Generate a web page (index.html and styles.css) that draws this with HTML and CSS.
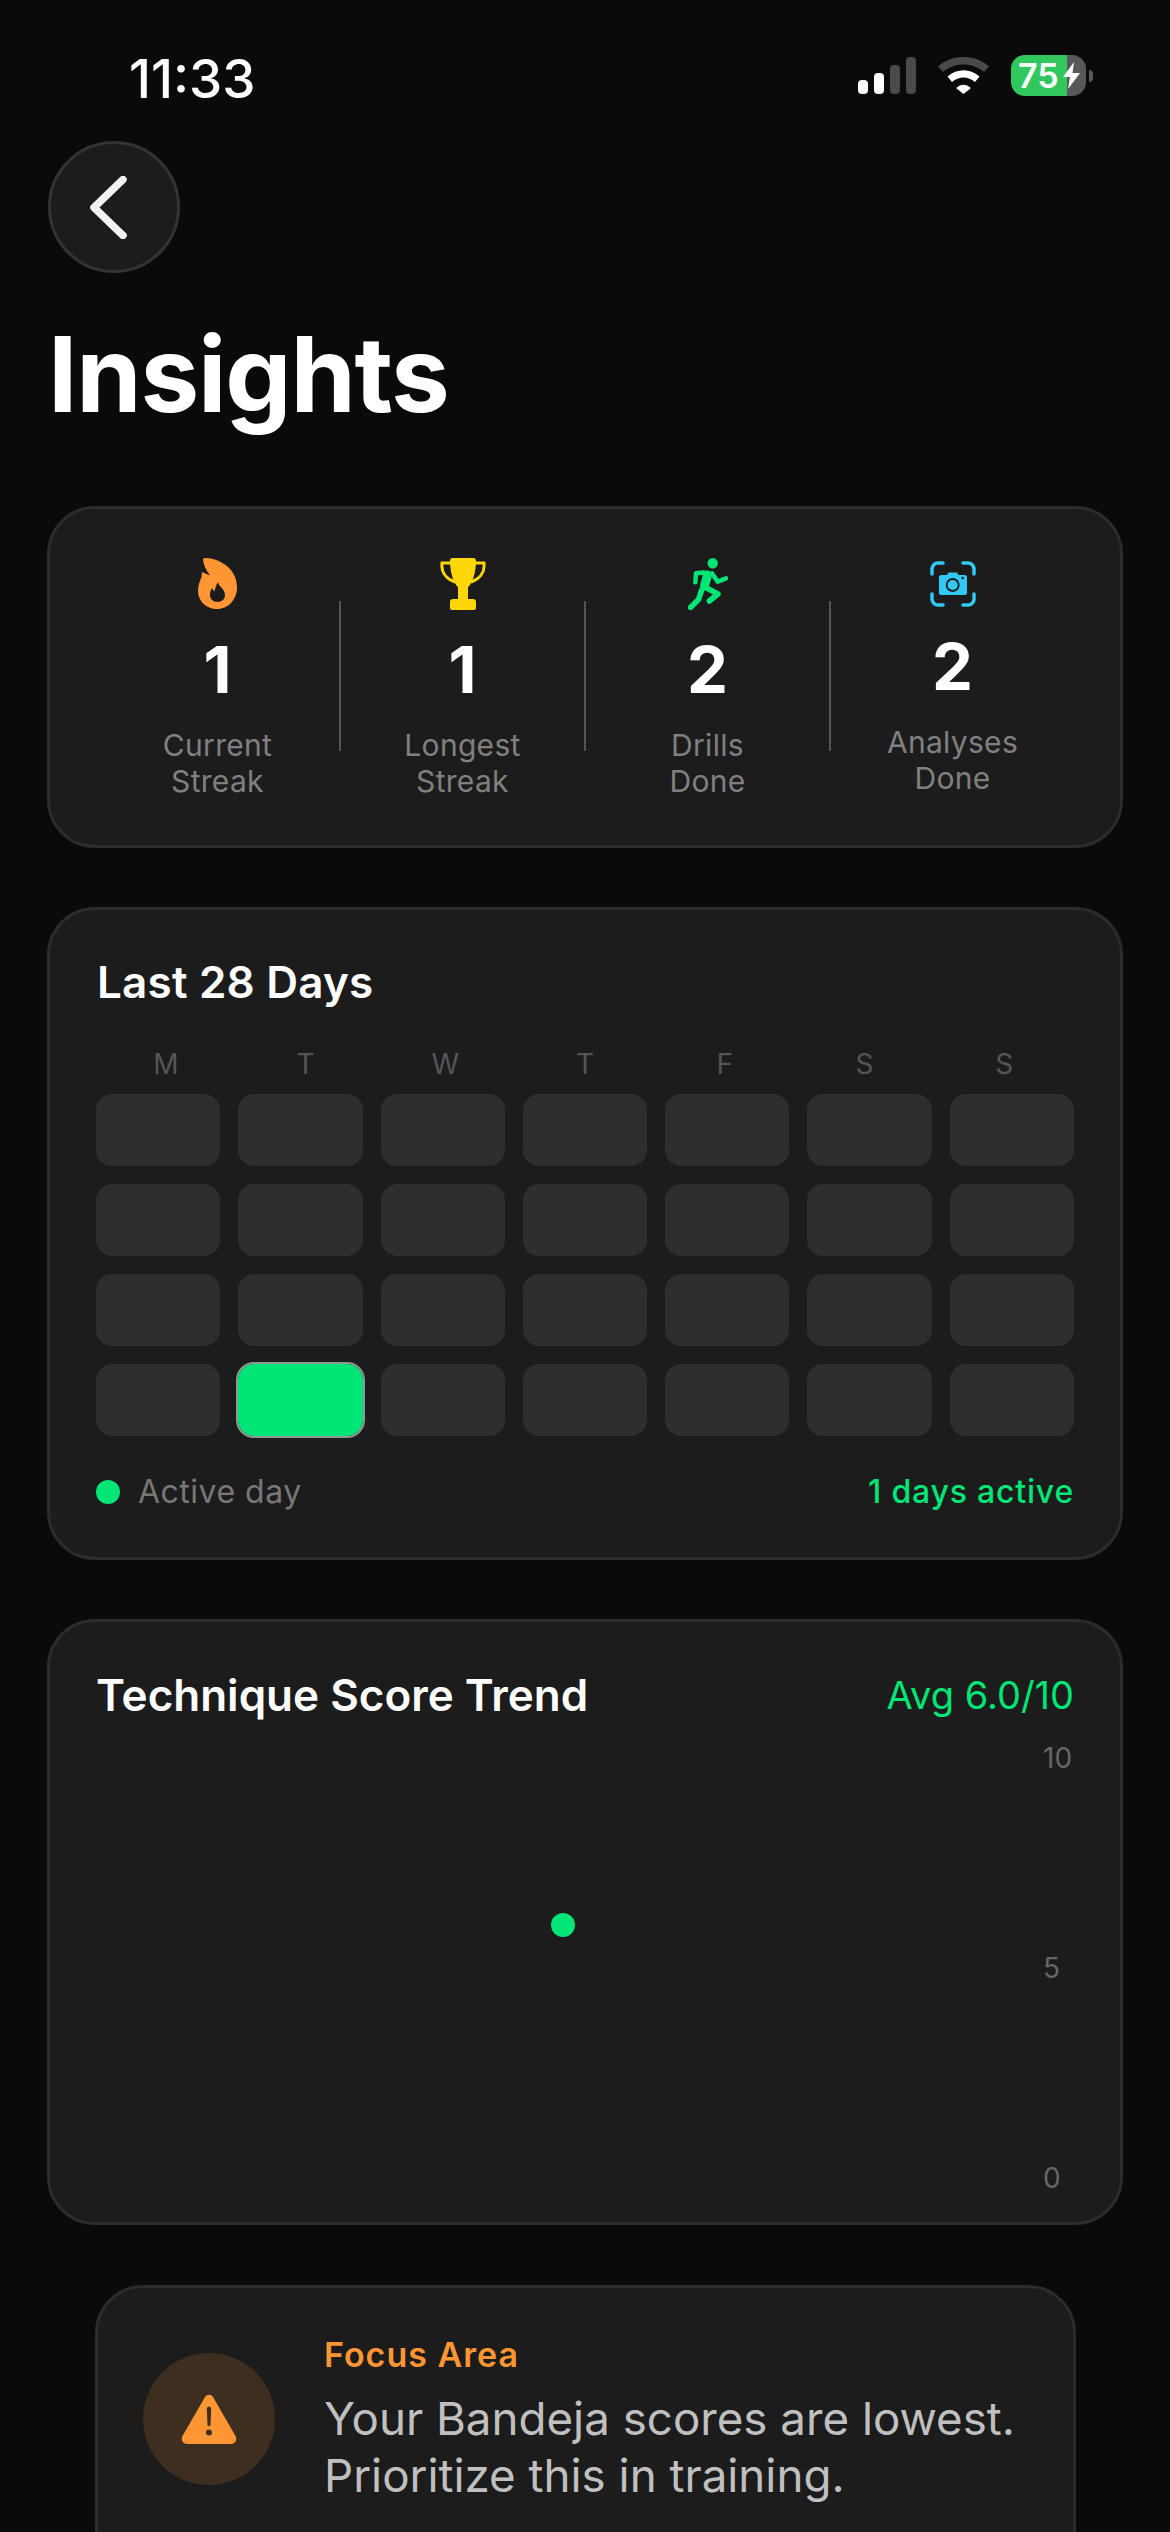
FILE: index.html
```html
<!DOCTYPE html>
<html lang="en">
<head>
<meta charset="utf-8">
<title>Insights</title>
<link rel="stylesheet" href="styles.css">
</head>
<body>
<div class="screen">
  <header class="status">
    <span class="time">11:33</span>
    <div class="status-icons">
      <div class="signal"><i class="bar b1"></i><i class="bar b2"></i><i class="bar b3 off"></i><i class="bar b4 off"></i></div>
      <svg class="wifi" viewBox="0 0 51 37"><path fill="#4a4a4a" d="M0 9.5C14-3.2 37-3.2 51 9.5L46 15C35 5 16 5 5 15Z"/><path fill="#fff" d="M9.5 19.5C19 11 32 11 41.5 19.5L37 25C30 19 21 19 14 25Z"/><path fill="#fff" d="M18 31C23 26.5 28 26.5 33 31L25.5 37Z"/></svg>
      <div class="battery-wrap">
        <div class="battery"><span class="battery-num">75</span><svg class="bolt" viewBox="0 0 17 27"><path fill="#fff" d="M11 0L0 15H7L5 27L17 11H9.5Z"/></svg></div>
        <i class="battery-tip"></i>
      </div>
    </div>
  </header>

  <button class="back" aria-label="Back"><svg class="chev" viewBox="0 0 37 63"><path d="M33 3.5L4 31.5L33 59.5" fill="none" stroke="#f2f2f2" stroke-width="7.500" stroke-linecap="round" stroke-linejoin="round"/></svg></button>

  <h1 class="title">Insights</h1>

  <section class="card stats">
    <div class="stat">
      <div class="stat-icon"><svg class="ic-flame" viewBox="0 0 39 51"><path fill="#FF9533" fill-rule="evenodd" d="M5 1.5C5 .5 6 0 8 0C24 1 39 12 39 29C39 42 30 51 19 51C8 51 0 43 0 33C0 27 2 23 3.500 19L4 14L12 17.500C8 12 5.500 7 5 1.500ZM20 24C20 28 27 31 27 37C27 41 24 44 19.500 44C15 44 12 41 12 37C12 34 13 32 14 30C15 32 15.500 33 16.500 33C17.500 30 18 27 20 24Z"/></svg></div>
      <div class="stat-num">1</div>
      <div class="stat-label">Current<br>Streak</div>
    </div>
    <i class="divider"></i>
    <div class="stat">
      <div class="stat-icon"><svg class="ic-trophy" viewBox="0 0 46 52"><path fill="#FFD60A" d="M10 2.500C10 1 11 0 12.500 0H33.500C35 0 36 1 36 2.500C36 17 31 27 28 29V41H33C35 41 36 42 36 44V50C36 51 35 52 34 52H12C11 52 10 51 10 50V44C10 42 11 41 13 41H18V29C15 27 10 17 10 2.500Z"/><path fill="none" stroke="#FFD60A" stroke-width="3" d="M11 5H2C1 14 6 21 15 24M35 5H44C45 14 40 21 31 24"/></svg></div>
      <div class="stat-num">1</div>
      <div class="stat-label">Longest<br>Streak</div>
    </div>
    <i class="divider"></i>
    <div class="stat">
      <div class="stat-icon"><svg class="ic-run" viewBox="0 0 40 52"><circle cx="24.700" cy="5.300" r="5.200" fill="#00E676"/><g fill="none" stroke="#00E676" stroke-linecap="round" stroke-linejoin="round"><path stroke-width="9" d="M19.500 17L16.500 28"/><path stroke-width="4.500" d="M16 14.500L8 15.300L7.300 24.300"/><path stroke-width="4.500" d="M24 15.300L29.700 23.700L38 20.300"/><path stroke-width="5.500" d="M16.300 28.700L30 36L21.300 43"/><path stroke-width="5.500" d="M13.700 32L10.500 41.500L2.500 49.500"/></g></svg></div>
      <div class="stat-num">2</div>
      <div class="stat-label">Drills<br>Done</div>
    </div>
    <i class="divider"></i>
    <div class="stat">
      <div class="stat-icon stat-icon-short"><svg class="ic-cam" viewBox="0 0 46 46"><g fill="none" stroke="#32C8F8" stroke-width="3.500" stroke-linecap="round"><path d="M2 13V8A6 6 0 0 1 8 2H13"/><path d="M33 2H38A6 6 0 0 1 44 8V13"/><path d="M2 33V38A6 6 0 0 0 8 44H13"/><path d="M33 44H38A6 6 0 0 0 44 38V33"/></g><path fill="#32C8F8" d="M11 14H17L18.500 11.500H27L28.500 14H35C36 14 37 15 37 16V32C37 33 36 34 35 34H11C10 34 9 33 9 32V16C9 15 10 14 11 14Z"/><circle cx="22.700" cy="24" r="6" fill="#32C8F8" stroke="#1c1c1c" stroke-width="1.800"/><circle cx="32.700" cy="17" r="1.300" fill="#1c1c1c"/></svg></div>
      <div class="stat-num">2</div>
      <div class="stat-label">Analyses<br>Done</div>
    </div>
  </section>

  <section class="card days">
    <h2 class="card-title">Last 28 Days</h2>
    <div class="dow"><span>M</span><span>T</span><span>W</span><span>T</span><span>F</span><span>S</span><span>S</span></div>
    <div class="grid">
      <i class="cell"></i><i class="cell"></i><i class="cell"></i><i class="cell"></i><i class="cell"></i><i class="cell"></i><i class="cell"></i>
      <i class="cell"></i><i class="cell"></i><i class="cell"></i><i class="cell"></i><i class="cell"></i><i class="cell"></i><i class="cell"></i>
      <i class="cell"></i><i class="cell"></i><i class="cell"></i><i class="cell"></i><i class="cell"></i><i class="cell"></i><i class="cell"></i>
      <i class="cell"></i><i class="cell on"></i><i class="cell"></i><i class="cell"></i><i class="cell"></i><i class="cell"></i><i class="cell"></i>
    </div>
    <div class="legend">
      <div class="legend-left"><i class="legend-dot"></i><span>Active day</span></div>
      <span class="legend-count">1 days active</span>
    </div>
  </section>

  <section class="card trend">
    <div class="trend-head">
      <h2 class="card-title">Technique Score Trend</h2>
      <span class="avg">Avg 6.0/10</span>
    </div>
    <div class="chart">
      <i class="point"></i>
      <div class="axis"><span>10</span><span>5</span><span>0</span></div>
    </div>
  </section>

  <section class="card focus">
    <div class="focus-circle"><svg class="ic-warn" viewBox="0 0 56 50"><path fill="#FF9533" d="M24 3C26 0 30 0 32 3L54.500 42C56.500 46 54 50 50 50H6C2 50-.5 46 1.500 42Z"/><path fill="#3e2e20" d="M25.800 15C25.800 13.500 26.800 12.500 28 12.500C29.200 12.500 30.200 13.500 30.200 15L29.500 31C29.400 32.500 26.600 32.500 26.500 31Z"/><circle cx="28" cy="38.500" r="3" fill="#3e2e20"/></svg></div>
    <div class="focus-text">
      <div class="focus-title">Focus Area</div>
      <p class="focus-body">Your Bandeja scores are lowest. Prioritize this in training.</p>
    </div>
  </section>
</div>
</body>
</html>
```
FILE: styles.css
```css
* { box-sizing: border-box; }
html, body { margin: 0; padding: 0; background: #0a0a0a; }
body { font-family: Inter, "Liberation Sans", sans-serif; color: #fff; }
.screen { width: 1170px; height: 2532px; overflow: hidden; padding: 0 47px; }

.status { height: 141px; display: flex; justify-content: space-between; align-items: flex-start; padding: 49px 30px 0 82px; }
.time { font-size: 53px; font-weight: 500; line-height: 60px; }
.status-icons { display: flex; align-items: flex-start; padding-top: 10px; margin-top: -2px; }
.signal { display: flex; align-items: flex-end; gap: 6px; height: 37px; }
.bar { display: block; width: 10px; border-radius: 4px; background: #fff; }
.bar.off { background: #4a4a4a; }
.b1 { height: 14px; } .b2 { height: 21px; } .b3 { height: 29px; } .b4 { height: 37px; }
.wifi { width: 51px; height: 37px; margin-left: 22px; display: block; }
.battery-wrap { display: flex; align-items: center; margin-left: 22px; margin-top: -2px; height: 41px; }
.battery { width: 75px; height: 41px; border-radius: 14px; background: linear-gradient(to right, #30c85c 75%, #585858 75%); display: flex; align-items: center; padding-left: 7px; }
.battery-num { font-size: 34px; font-weight: 600; line-height: 41px; width: 45px; }
.bolt { width: 17px; height: 27px; display: block; }
.battery-tip { display: block; width: 4px; height: 12px; margin-left: 3px; background: #585858; border-radius: 0 4px 4px 0; }

.back { display: flex; align-items: center; justify-content: center; width: 132px; height: 132px; margin: 0 0 0 1px; padding: 0 12px 0 0; border-radius: 50%; background: #1c1c1c; border: 3px solid #333; }
.chev { width: 37px; height: 63px; display: block; }

.title { margin: 37px 0 0 1px; font-size: 105px; font-weight: 700; line-height: 128px; letter-spacing: -1.2px; }

.card { background: #1c1c1c; border: 3px solid #2c2c2c; border-radius: 48px; }

.stats { margin-top: 68px; height: 342px; padding: 49px 46px 0; display: flex; align-items: flex-start; }
.stat { flex: 1 1 0; display: flex; flex-direction: column; align-items: center; }
.stat-icon { height: 52px; display: flex; justify-content: center; align-items: flex-start; }
.stat-icon-short { height: 49px; align-items: flex-end; }
.ic-flame { width: 39px; height: 51px; display: block; }
.ic-trophy { width: 46px; height: 52px; display: block; }
.ic-run { width: 40px; height: 52px; display: block; }
.ic-cam { width: 46px; height: 46px; display: block; }
.stat-num { margin-top: 21px; font-size: 65px; font-weight: 700; line-height: 78px; }
.stat-label { margin-top: 18px; font-size: 30px; line-height: 36px; color: #808080; text-align: center; letter-spacing: .3px; }
.divider { display: block; flex: none; width: 2px; height: 150px; margin-top: 43px; background: #555; }

.days { margin-top: 59px; height: 653px; padding: 0 46px; }
.card-title { margin: 0; font-size: 44px; font-weight: 600; line-height: 52px; }
.days .card-title { padding: 46px 0 0 1px; height: 100px; letter-spacing: .2px; }
.dow { display: flex; margin-top: 37px; height: 40px; }
.dow span { flex: 1 1 0; text-align: center; font-size: 28px; line-height: 34px; color: #555; }
.grid { display: grid; grid-template-columns: repeat(7, 1fr); gap: 18px; margin-top: 7px; }
.cell { display: block; height: 72px; border-radius: 16px; background: #2e2e2e; }
.cell.on { background: #00E676; outline: 2px solid #8a9a92; outline-offset: 0; }
.legend { display: flex; justify-content: space-between; align-items: center; margin-top: 36px; font-size: 32px; line-height: 40px; letter-spacing: .5px; }
.legend-left { display: flex; align-items: center; gap: 18px; color: #777; }
.legend-dot { display: block; width: 24px; height: 24px; border-radius: 50%; background: #00E676; }
.legend-count { color: #00E676; font-weight: 500; letter-spacing: .8px; }

.trend { margin-top: 59px; height: 606px; padding: 47px 46px 0; }
.trend-head { display: flex; justify-content: space-between; align-items: center; }
.avg { font-size: 38px; font-weight: 400; color: #00E676; }
.chart { position: relative; height: 454px; margin-top: 20px; }
.axis { position: absolute; left: 947px; top: 0; height: 100%; display: flex; flex-direction: column; justify-content: space-between; font-size: 28px; line-height: 34px; color: #666; }
.point { position: absolute; left: 455px; top: 172px; width: 24px; height: 24px; border-radius: 50%; background: #00E676; }

.focus { margin: 60px 47px 0 48px; height: 320px; padding: 47px 47px 0 45px; display: flex; align-items: flex-start; gap: 49px; }
.focus-circle { flex: none; width: 132px; height: 132px; margin-top: 18px; border-radius: 50%; background: #3e2e20; display: flex; align-items: center; justify-content: center; }
.ic-warn { width: 56px; height: 50px; display: block; }
.focus-title { font-size: 34px; font-weight: 600; line-height: 42px; color: #FF9533; margin-top: -1px; letter-spacing: 1px; }
.focus-body { margin: 14px 0 0; font-size: 45.7px; line-height: 57px; color: #c0c0c0; }
```
